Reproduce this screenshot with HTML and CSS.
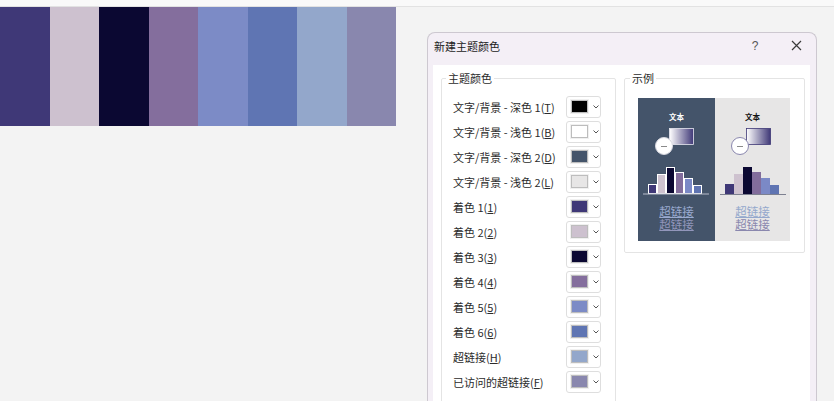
FILE: index.html
```html
<!DOCTYPE html>
<html lang="zh-CN">
<head>
<meta charset="utf-8">
<title>新建主题颜色</title>
<link rel="stylesheet" href="styles.css">
</head>
<body>
<div class="topbar"></div>
<div class="main">
  <div class="strip">
    <div class="sw c1"></div><div class="sw c2"></div><div class="sw c3"></div><div class="sw c4"></div>
    <div class="sw c5"></div><div class="sw c6"></div><div class="sw c7"></div><div class="sw c8"></div>
  </div>
  <div class="dialog">
    <div class="titlebar">
      <span class="title">新建主题颜色</span>
      <span class="help">?</span>
      <span class="close"><svg width="11" height="11" viewBox="0 0 11 11"><path d="M1 1L10 10M10 1L1 10" stroke="#3a3a3a" stroke-width="1.2" fill="none"/></svg></span>
    </div>
    <div class="panel">
      <fieldset class="group colors">
        <legend>主题颜色</legend>
        <div class="row"><span class="lbl">文字/背景 - 深色 1(<u>T</u>)</span><span class="pick"><i class="chip k-dk1"></i><svg class="chev" width="6" height="4" viewBox="0 0 6 4"><path d="M0.5 0.5L3 3L5.5 0.5" stroke="#555" fill="none"/></svg></span></div>
        <div class="row"><span class="lbl">文字/背景 - 浅色 1(<u>B</u>)</span><span class="pick"><i class="chip k-lt1"></i><svg class="chev" width="6" height="4" viewBox="0 0 6 4"><path d="M0.5 0.5L3 3L5.5 0.5" stroke="#555" fill="none"/></svg></span></div>
        <div class="row"><span class="lbl">文字/背景 - 深色 2(<u>D</u>)</span><span class="pick"><i class="chip k-dk2"></i><svg class="chev" width="6" height="4" viewBox="0 0 6 4"><path d="M0.5 0.5L3 3L5.5 0.5" stroke="#555" fill="none"/></svg></span></div>
        <div class="row"><span class="lbl">文字/背景 - 浅色 2(<u>L</u>)</span><span class="pick"><i class="chip k-lt2"></i><svg class="chev" width="6" height="4" viewBox="0 0 6 4"><path d="M0.5 0.5L3 3L5.5 0.5" stroke="#555" fill="none"/></svg></span></div>
        <div class="row"><span class="lbl">着色 1(<u>1</u>)</span><span class="pick"><i class="chip c1"></i><svg class="chev" width="6" height="4" viewBox="0 0 6 4"><path d="M0.5 0.5L3 3L5.5 0.5" stroke="#555" fill="none"/></svg></span></div>
        <div class="row"><span class="lbl">着色 2(<u>2</u>)</span><span class="pick"><i class="chip c2"></i><svg class="chev" width="6" height="4" viewBox="0 0 6 4"><path d="M0.5 0.5L3 3L5.5 0.5" stroke="#555" fill="none"/></svg></span></div>
        <div class="row"><span class="lbl">着色 3(<u>3</u>)</span><span class="pick"><i class="chip c3"></i><svg class="chev" width="6" height="4" viewBox="0 0 6 4"><path d="M0.5 0.5L3 3L5.5 0.5" stroke="#555" fill="none"/></svg></span></div>
        <div class="row"><span class="lbl">着色 4(<u>4</u>)</span><span class="pick"><i class="chip c4"></i><svg class="chev" width="6" height="4" viewBox="0 0 6 4"><path d="M0.5 0.5L3 3L5.5 0.5" stroke="#555" fill="none"/></svg></span></div>
        <div class="row"><span class="lbl">着色 5(<u>5</u>)</span><span class="pick"><i class="chip c5"></i><svg class="chev" width="6" height="4" viewBox="0 0 6 4"><path d="M0.5 0.5L3 3L5.5 0.5" stroke="#555" fill="none"/></svg></span></div>
        <div class="row"><span class="lbl">着色 6(<u>6</u>)</span><span class="pick"><i class="chip c6"></i><svg class="chev" width="6" height="4" viewBox="0 0 6 4"><path d="M0.5 0.5L3 3L5.5 0.5" stroke="#555" fill="none"/></svg></span></div>
        <div class="row"><span class="lbl">超链接(<u>H</u>)</span><span class="pick"><i class="chip c7"></i><svg class="chev" width="6" height="4" viewBox="0 0 6 4"><path d="M0.5 0.5L3 3L5.5 0.5" stroke="#555" fill="none"/></svg></span></div>
        <div class="row"><span class="lbl">已访问的超链接(<u>F</u>)</span><span class="pick"><i class="chip c8"></i><svg class="chev" width="6" height="4" viewBox="0 0 6 4"><path d="M0.5 0.5L3 3L5.5 0.5" stroke="#555" fill="none"/></svg></span></div>
      </fieldset>
      <fieldset class="group sample">
        <legend>示例</legend>
        <div class="preview">
          <div class="pv dark">
            <span class="pv-title">文本</span>
            <svg class="pv-art" width="76" height="72" viewBox="0 0 76 72">
              <defs>
                <linearGradient id="gd" x1="0" x2="1" y1="0" y2="0"><stop offset="0" stop-color="#ffffff"/><stop offset="1" stop-color="#3f3877"/></linearGradient>
              </defs>
              <rect x="31.5" y="3.5" width="24" height="16" fill="url(#gd)" stroke="#e8e8f0" stroke-width="0.8"/>
              <circle cx="26" cy="21" r="8.5" fill="#ffffff" stroke="#d8d8e0" stroke-width="1"/>
              <path d="M23 21.5H29" stroke="#8a8a8a" stroke-width="1"/>
              <rect x="10.5" y="59.5" width="8" height="9" fill="#3f3877" stroke="#ffffff" stroke-width="1"/>
              <rect x="19.5" y="49.5" width="8" height="19" fill="#cec2cf" stroke="#ffffff" stroke-width="1"/>
              <rect x="28.5" y="42.5" width="8" height="26" fill="#0b0832" stroke="#ffffff" stroke-width="1"/>
              <rect x="37.5" y="47.5" width="8" height="21" fill="#826d9c" stroke="#ffffff" stroke-width="1"/>
              <rect x="46.5" y="53.5" width="8" height="15" fill="#7b89c6" stroke="#ffffff" stroke-width="1"/>
              <rect x="55.5" y="60.5" width="8" height="8" fill="#5f74b2" stroke="#ffffff" stroke-width="1"/>
              <path d="M5 69H71" stroke="#b8bccb" stroke-width="1"/>
            </svg>
            <span class="pv-link l1">超链接</span>
            <span class="pv-link l2">超链接</span>
          </div>
          <div class="pv light">
            <span class="pv-title">文本</span>
            <svg class="pv-art" width="76" height="72" viewBox="0 0 76 72">
              <defs>
                <linearGradient id="gl" x1="0" x2="1" y1="0" y2="0"><stop offset="0" stop-color="#ffffff"/><stop offset="1" stop-color="#3f3877"/></linearGradient>
              </defs>
              <rect x="31.5" y="3.5" width="24" height="16" fill="url(#gl)" stroke="#3f3877" stroke-width="0.8"/>
              <circle cx="25" cy="21" r="8.5" fill="#ffffff" stroke="#8a87ae" stroke-width="1"/>
              <path d="M22 21.5H28" stroke="#8a8a8a" stroke-width="1"/>
              <rect x="10" y="59" width="9" height="10" fill="#3f3877"/>
              <rect x="19" y="49" width="9" height="20" fill="#cec2cf"/>
              <rect x="28" y="42" width="9" height="27" fill="#0b0832"/>
              <rect x="37" y="47" width="9" height="22" fill="#826d9c"/>
              <rect x="46" y="53" width="9" height="16" fill="#7b89c6"/>
              <rect x="55" y="60" width="9" height="9" fill="#5f74b2"/>
              <path d="M5 69.5H71" stroke="#7d8090" stroke-width="1"/>
            </svg>
            <span class="pv-link l1">超链接</span>
            <span class="pv-link l2">超链接</span>
          </div>
        </div>
      </fieldset>
    </div>
  </div>
</div>
</body>
</html>
```
FILE: styles.css
```css
html, body {
  margin: 0;
  padding: 0;
}
body {
  width: 834px;
  height: 401px;
  overflow: hidden;
  background: #f3f3f3;
  font-family: "Noto Sans CJK SC", "Noto Sans", sans-serif;
  color: #2b2b2b;
}
.topbar {
  height: 6px;
  background: #f9f9f9;
  border-bottom: 1px solid #e2e2e2;
}
.main {
  display: flex;
  align-items: flex-start;
}
.strip {
  display: flex;
  width: 396px;
  height: 119px;
  flex: none;
}
.sw { flex: 1; }
.c1 { background: #3f3877; }
.c2 { background: #cdc1cf; }
.c3 { background: #0b0832; }
.c4 { background: #846e9d; }
.c5 { background: #7c8bc6; }
.c6 { background: #5f75b3; }
.c7 { background: #93a7cb; }
.c8 { background: #8987ae; }
.k-dk1 { background: #000000; }
.k-lt1 { background: #ffffff; }
.k-dk2 { background: #44546a; }
.k-lt2 { background: #e7e6e6; }

.dialog {
  flex: none;
  margin-left: 31px;
  margin-top: 25px;
  width: 390px;
  height: 380px;
  box-sizing: border-box;
  border: 1px solid #cdc8d0;
  border-bottom: none;
  border-radius: 8px 8px 0 0;
  background: #f4eff6;
  display: flex;
  flex-direction: column;
}
.titlebar {
  height: 32px;
  flex: none;
  display: flex;
  align-items: flex-start;
  padding: 5px 0 0 6px;
  box-sizing: border-box;
  font-size: 11px;
  line-height: 16px;
}
.title { flex: 1; color: #222; }
.help {
  width: 12px;
  text-align: center;
  font-family: "Liberation Sans", sans-serif;
  font-size: 12px;
  color: #555;
  margin-right: 30px;
}
.close {
  width: 11px;
  height: 11px;
  margin-top: 2px;
  margin-right: 14px;
  display: flex;
}
.panel {
  flex: 1;
  margin: 0 6px 0 5px;
  background: #ffffff;
  display: flex;
  align-items: flex-start;
  gap: 8px;
  padding: 5px 0 0 8px;
}
.group {
  margin: 0;
  border: 1px solid #e4e4e4;
  border-radius: 2px;
  box-sizing: border-box;
  min-width: 0;
}
.group legend {
  padding: 0 2px;
  font-size: 11px;
  line-height: 16px;
  color: #2b2b2b;
}
.colors legend { margin-left: -7px; }
.sample legend { margin-left: -8px; }
.colors {
  width: 175px;
  height: 400px;
  padding: 8px 14px 0 11px;
}
.row {
  height: 25px;
  display: flex;
  align-items: center;
  justify-content: space-between;
}
.lbl {
  font-size: 11px;
  line-height: 16px;
  white-space: nowrap;
}
.lbl u { text-underline-offset: 1px; }
.pick {
  width: 35px;
  height: 22px;
  box-sizing: border-box;
  border: 1px solid #dedede;
  border-radius: 3px;
  background: #fff;
  display: flex;
  align-items: center;
  padding-left: 4px;
  gap: 5px;
}
.chip {
  display: block;
  width: 17px;
  height: 13px;
  box-sizing: border-box;
  border: 1px solid #bdbdbd;
  outline: 1px solid #f0f0f0;
}
.sample {
  width: 181px;
  height: 183px;
  padding: 12px 0 0 13px;
}
.preview {
  display: flex;
}
.pv {
  width: 76px;
  height: 143px;
  display: flex;
  flex-direction: column;
  align-items: center;
  padding-top: 14px;
  box-sizing: border-box;
}
.pv.dark { background: #44546a; width: 77px; }
.pv.light { background: #e7e6e6; width: 75px; }
.pv-title {
  font-size: 7.5px;
  line-height: 10px;
  font-weight: bold;
}
.dark .pv-title { color: #ffffff; }
.light .pv-title { color: #111111; }
.pv-art {
  display: block;
  margin-top: 3px;
  align-self: flex-start;
}
.pv-link {
  display: block;
  font-family: "Liberation Sans", "Noto Sans CJK SC", sans-serif;
  font-size: 11.5px;
  line-height: 13px;
  height: 13px;
  text-decoration: underline;
  text-underline-offset: 1px;
}
.pv-link.l1 { margin-top: 9px; }
.dark .l1 { color: #9aaad0; }
.dark .l2 { color: #9296bb; }
.light .l1 { color: #94a8cc; }
.light .l2 { color: #8a87ae; }
```
